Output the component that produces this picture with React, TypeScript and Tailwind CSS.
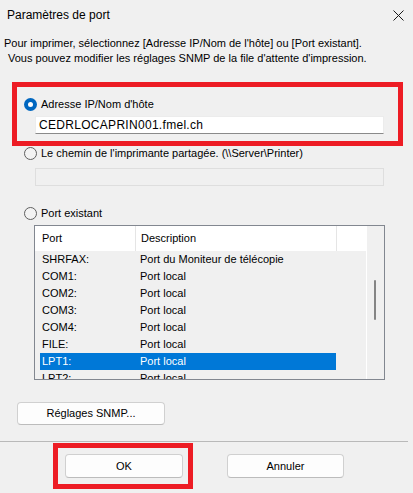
import React from "react";

const rows: [string, string][] = [
  ["SHRFAX:", "Port du Moniteur de télécopie"],
  ["COM1:", "Port local"],
  ["COM2:", "Port local"],
  ["COM3:", "Port local"],
  ["COM4:", "Port local"],
  ["FILE:", "Port local"],
  ["LPT1:", "Port local"],
  ["LPT2:", "Port local"],
];

function RadioOn() {
  return (
    <div className="w-[13px] h-[13px] rounded-full bg-[#0067c0] flex items-center justify-center shrink-0">
      <div className="w-[5px] h-[5px] rounded-full bg-white" />
    </div>
  );
}

function RadioOff() {
  return <div className="w-[13px] h-[13px] rounded-full border border-[#5f5f5f] bg-[#f3f3f3] shrink-0" />;
}

export default function App() {
  return (
    <div
      className="w-[413px] h-[493px] bg-[#f0f0f0] flex flex-col overflow-hidden text-black text-[11px]"
      style={{ fontFamily: '"Liberation Sans", Arial, sans-serif' }}
    >
      {/* Title bar */}
      <div className="h-[30px] flex items-center justify-between pl-[7px] pr-[9px] shrink-0">
        <span className="text-[12px]">Paramètres de port</span>
        <svg width="11" height="11" viewBox="0 0 11 11">
          <path d="M0.5 0.5 L10.5 10.5 M10.5 0.5 L0.5 10.5" stroke="#1a1a1a" strokeWidth="1" />
        </svg>
      </div>

      {/* Intro */}
      <div className="mt-[6px] pl-[4px] leading-[15px] shrink-0">
        <div>Pour imprimer, sélectionnez [Adresse IP/Nom de l'hôte] ou [Port existant].</div>
        <div className="pl-[4px]">Vous pouvez modifier les réglages SNMP de la file d'attente d'impression.</div>
      </div>

      {/* Red box 1 */}
      <div className="mt-[16px] ml-[12px] w-[391px] h-[64px] border-[5px] border-[#ed1c24] flex flex-col pt-[9px] pl-[7px] shrink-0">
        <div className="h-[16px] flex items-center gap-[4px]">
          <RadioOn />
          <span>Adresse IP/Nom d'hôte</span>
        </div>
        <div className="mt-[4px] ml-[11px] w-[349px] h-[18px] bg-white border border-[#ececec] border-b-[#8a8a8a] flex items-center pl-[3px] text-[12px] tracking-[0.3px]">
          CEDRLOCAPRIN001.fmel.ch
        </div>
      </div>

      {/* Radio 2 */}
      <div className="ml-[24px] h-[14px] flex items-center gap-[4px] shrink-0">
        <RadioOff />
        <span>Le chemin de l'imprimante partagée. (\\Server\Printer)</span>
      </div>
      <div className="mt-[8px] ml-[35px] w-[349px] h-[18px] bg-[#f0f0f0] border border-[#dedede] shrink-0" />

      {/* Radio 3 */}
      <div className="mt-[20px] ml-[24px] h-[14px] flex items-center gap-[4px] shrink-0">
        <RadioOff />
        <span>Port existant</span>
      </div>

      {/* List */}
      <div className="mt-[5px] ml-[34px] w-[351px] h-[155px] border border-[#828790] flex shrink-0">
        <div className="w-[331px] flex flex-col overflow-hidden">
          <div className="h-[25px] bg-white flex shrink-0">
            <div className="w-[100px] pl-[7px] flex items-center">Port</div>
            <div className="w-px bg-[#e5e5e5]" />
            <div className="w-[200px] pl-[5px] flex items-center">Description</div>
            <div className="w-px bg-[#e5e5e5]" />
            <div className="flex-1" />
          </div>
          {rows.map(([p, d]) => {
            const sel = p === "LPT1:";
            return (
              <div
                key={p}
                className={
                  sel
                    ? "ml-[5px] w-[296px] h-[17px] shrink-0 flex items-center bg-[#0078d7] text-white"
                    : "ml-[5px] w-[296px] h-[17px] shrink-0 flex items-center"
                }
              >
                <div className="w-[100px] pl-[2px]">{p}</div>
                <div>{d}</div>
              </div>
            );
          })}
        </div>
        <div className="w-px bg-white" />
        <div className="w-[17px] bg-[#f0f0f0] flex flex-col">
          <div className="mt-[54px] ml-[7px] w-[2px] h-[40px] bg-[#858585] rounded-full" />
        </div>
      </div>

      {/* SNMP button */}
      <div className="mt-[22px] ml-[17px] w-[148px] h-[23px] bg-[#fdfdfd] border border-[#d0d0d0] border-b-[#bcbcbc] rounded-[4px] flex items-center justify-center shrink-0">
        Réglages SNMP...
      </div>

      {/* Separator */}
      <div className="mt-[16px] w-[408px] h-px bg-[#b9b9b9] shrink-0" />

      {/* Bottom buttons */}
      <div className="mt-[1px] flex items-start shrink-0">
        <div className="ml-[53px] w-[140px] h-[46px] border-[5px] border-[#ed1c24] pt-[6px] pl-[7px]">
          <div className="w-[118px] h-[24px] bg-[#fdfdfd] border border-[#d0d0d0] border-b-[#bcbcbc] rounded-[4px] flex items-center justify-center">
            OK
          </div>
        </div>
        <div className="ml-[34px] mt-[11px] w-[117px] h-[24px] bg-[#fdfdfd] border border-[#d0d0d0] border-b-[#bcbcbc] rounded-[4px] flex items-center justify-center">
          Annuler
        </div>
      </div>
    </div>
  );
}
